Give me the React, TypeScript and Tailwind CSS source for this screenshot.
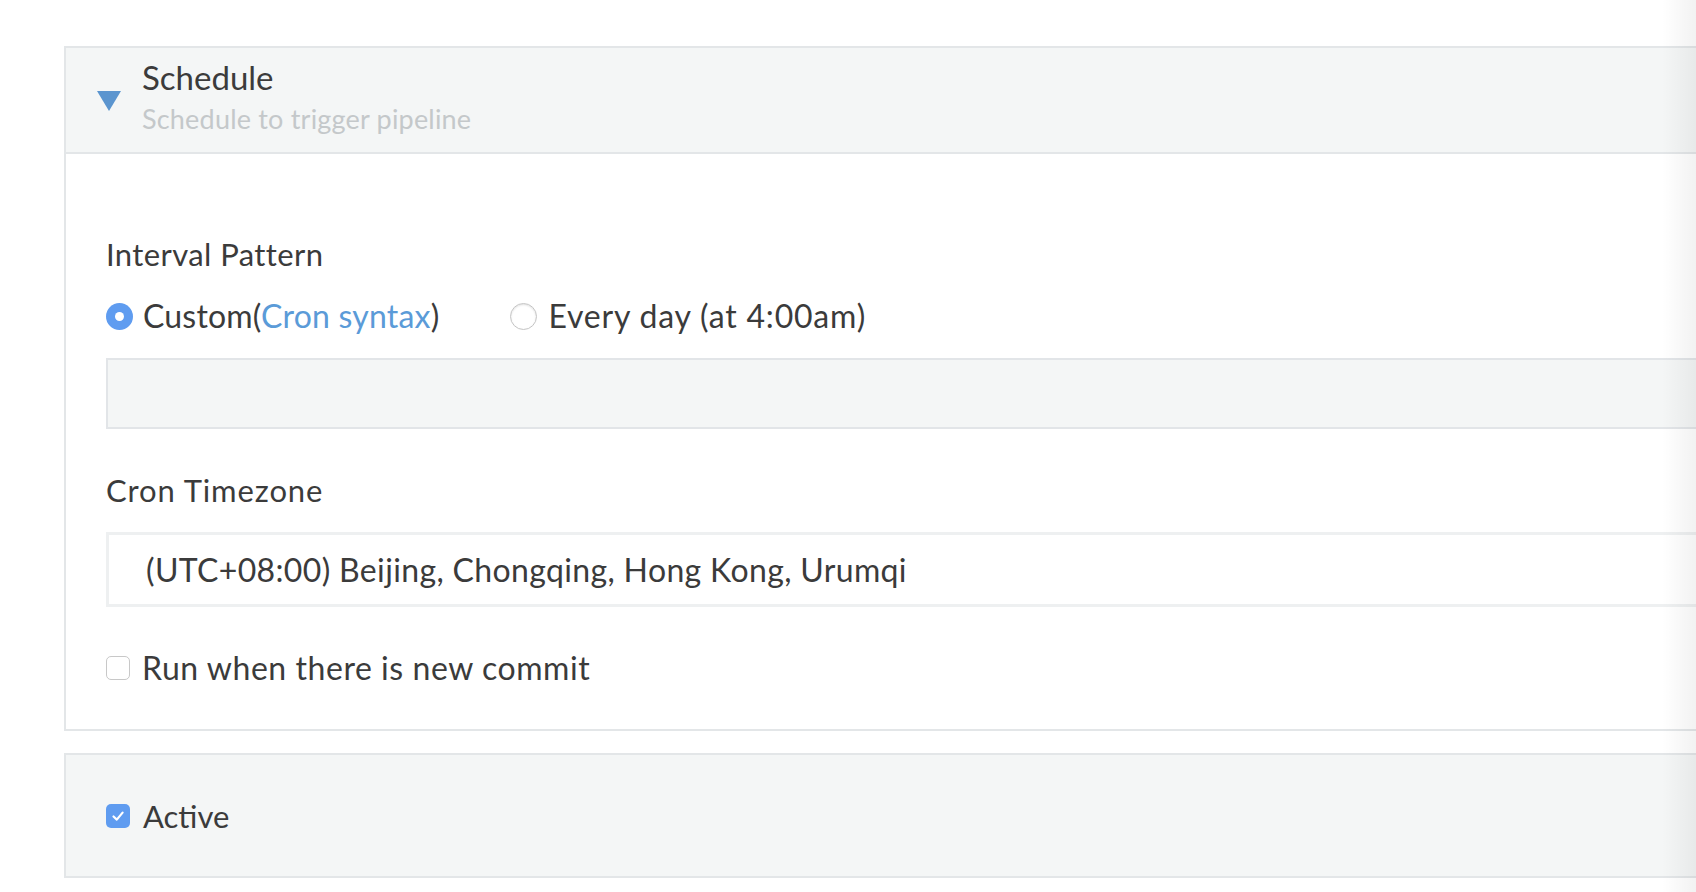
import React from 'react'

const font = { fontFamily: 'Lato, "Noto Sans", sans-serif' }

function Radio({ checked }: { checked?: boolean }) {
  if (checked) {
    return (
      <span className="flex h-[27px] w-[27px] shrink-0 items-center justify-center rounded-full bg-[#5f9cf0]">
        <span className="h-[9px] w-[9px] rounded-full bg-white" />
      </span>
    )
  }
  return (
    <span className="h-[27px] w-[27px] shrink-0 rounded-full border border-[#c4c4c4] bg-white shadow-[inset_0_1px_2px_rgba(0,0,0,0.12)]" />
  )
}

function Checkbox({ checked }: { checked?: boolean }) {
  if (checked) {
    return (
      <span className="flex h-[24px] w-[24px] shrink-0 items-center justify-center rounded-[5px] bg-[#5f9cf0]">
        <svg width="16" height="16" viewBox="0 0 16 16" fill="none">
          <path d="M3.5 8.5 L6.8 11.6 L12.6 4.6" stroke="white" strokeWidth="2.2" strokeLinecap="round" strokeLinejoin="round" />
        </svg>
      </span>
    )
  }
  return <span className="h-[24px] w-[24px] shrink-0 rounded-[5px] border border-[#c8c8c8] bg-white" />
}

export default function App() {
  return (
    <div className="relative min-h-[892px] w-full overflow-hidden bg-white text-[#3b3b3b]" style={font}>
      <div className="pl-[64px] pt-[46px]">
        {/* Schedule card */}
        <div className="border-2 border-r-0 border-[#e3e6e8]">
          <div className="flex h-[106px] items-center border-b-2 border-[#e3e6e8] bg-[#f4f6f6] pl-[31px]">
            <svg width="24" height="20" viewBox="0 0 24 20" className="mt-[2px] shrink-0">
              <polygon points="0,0 24,0 12,20" fill="#5b95cf" />
            </svg>
            <div className="mb-[8px] ml-[21px] flex flex-col">
              <div className="text-[33px] leading-[38px] text-[#3b3b3b]">Schedule</div>
              <div className="mt-[7px] text-[27px] leading-[32px] tracking-[0.2px] text-[#c4c8ca]">Schedule to trigger pipeline</div>
            </div>
          </div>
          <div className="pl-[40px] pt-[82px] pb-[43px]">
            <div className="text-[31px] leading-[36px] tracking-[0.4px]">Interval Pattern</div>
            <div className="mt-[26px] flex h-[36px] items-center">
              <div className="flex items-center">
                <Radio checked />
                <span className="ml-[10px] text-[32px] leading-[36px] tracking-[0.2px]">
                  Custom(<span className="text-[#5b9bd8]">Cron syntax</span>)
                </span>
              </div>
              <div className="ml-[71px] flex items-center">
                <Radio />
                <span className="ml-[11px] text-[32px] leading-[36px] tracking-[0.8px]">Every day (at 4:00am)</span>
              </div>
            </div>
            <div className="mt-[24px] h-[71px] border-2 border-r-0 border-[#e2e5e8] bg-[#f4f6f6]" />
            <div className="mt-[43px] text-[31px] leading-[36px] tracking-[0.9px]">Cron Timezone</div>
            <div className="mt-[24px] flex h-[75px] items-center border-[3px] border-r-0 border-[#eef0f1] bg-white pl-[37px] text-[32px] tracking-[0.35px]">
              (UTC+08:00) Beijing, Chongqing, Hong Kong, Urumqi
            </div>
            <div className="mt-[43px] flex h-[36px] items-center">
              <Checkbox />
              <span className="ml-[12px] text-[32px] leading-[36px] tracking-[0.55px]">Run when there is new commit</span>
            </div>
          </div>
        </div>

        {/* Active card */}
        <div className="mt-[22px] flex h-[125px] items-center border-2 border-r-0 border-[#e3e6e8] bg-[#f4f6f6] pl-[40px]">
          <Checkbox checked />
          <span className="ml-[13px] text-[31px] leading-[36px]">Active</span>
        </div>
      </div>

      {/* right edge shade */}
      <div className="pointer-events-none absolute inset-y-0 right-0 w-[34px] bg-gradient-to-r from-transparent to-[rgba(0,0,0,0.05)]" />
    </div>
  )
}
